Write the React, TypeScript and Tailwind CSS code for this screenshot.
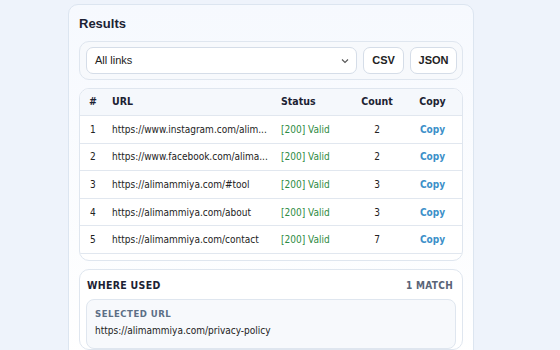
import React from 'react';

const rows = [
  { n: 1, url: 'https://www.instagram.com/alim...', count: 2 },
  { n: 2, url: 'https://www.facebook.com/alima...', count: 2 },
  { n: 3, url: 'https://alimammiya.com/#tool', count: 3 },
  { n: 4, url: 'https://alimammiya.com/about', count: 3 },
  { n: 5, url: 'https://alimammiya.com/contact', count: 7 },
];

const verdana = "font-['Verdana','DejaVu_Sans_Condensed','DejaVu_Sans',sans-serif]";

export default function App() {
  return (
    <div className="w-[560px] h-[350px] overflow-hidden bg-[#eef3fb] font-['Liberation_Sans',Arial,sans-serif]">
      <div className="ml-[68px] mt-[4px] w-[406px] h-[360px] rounded-[10px] border border-[#dce5f0] bg-gradient-to-b from-[#f6f9fe] to-white px-[10px] pt-[11px]">
        <h2 className="text-[13px] font-bold text-[#1c2233] leading-[16px]">Results</h2>

        <div className="mt-[9px] flex items-center gap-[6px] rounded-[10px] border border-[#dfe6ef] bg-[#f7f9fc] p-[5px] pl-[6px]">
          <div className="flex-1 h-[27px] flex items-center justify-between rounded-[7px] border border-[#d5dde8] bg-white pl-[8px] pr-[6px]">
            <span className="text-[11px] text-[#222]">All links</span>
            <svg width="10" height="10" viewBox="0 0 10 10" fill="none" stroke="#555" strokeWidth="1.1">
              <path d="M2 3.5 L5 6.5 L8 3.5" />
            </svg>
          </div>
          <button className="h-[27px] w-[41px] rounded-[7px] border border-[#d5dde8] bg-white text-[11px] font-bold text-[#222]">CSV</button>
          <button className="h-[27px] w-[47px] rounded-[7px] border border-[#d5dde8] bg-white text-[11px] font-bold text-[#222]">JSON</button>
        </div>

        <div className={`mt-[8px] rounded-[10px] border border-[#dfe6ef] bg-white overflow-hidden pb-[6px] ${verdana}`}>
          <div className="flex items-center h-[27px] bg-[#f5f8fc] border-b border-[#e1e7ef] text-[10.5px] font-bold text-[#1c2233]">
            <div className="w-[32px] pl-[9px]">#</div>
            <div className="w-[169px]">URL</div>
            <div className="w-[70px]">Status</div>
            <div className="w-[52px] text-center">Count</div>
            <div className="flex-1 text-center">Copy</div>
          </div>
          {rows.map((r) => (
            <div key={r.n} className="flex items-center h-[27.6px] border-b border-[#e1e7ef] text-[10px] text-[#222]">
              <div className="w-[32px] pl-[10px]">{r.n}</div>
              <div className="w-[169px] whitespace-nowrap">{r.url}</div>
              <div className="w-[70px] text-[#2e8b43]">[200] Valid</div>
              <div className="w-[52px] text-center">{r.count}</div>
              <div className="flex-1 text-center font-bold text-[#3b90c9]">Copy</div>
            </div>
          ))}
        </div>

        <div className={`mt-[8px] rounded-[10px] border border-[#dfe6ef] bg-white px-[6px] pt-[8px] ${verdana}`}>
          <div className="flex items-center justify-between px-[1px]">
            <span className="text-[10.5px] font-bold text-[#1c2233] tracking-[0.3px]">WHERE USED</span>
            <span className="text-[10px] font-bold text-[#596477] tracking-[0.3px] pr-[2px]">1 MATCH</span>
          </div>
          <div className="mt-[5px] rounded-[8px] border border-[#dfe6ef] bg-[#f7f9fc] px-[8px] pt-[7px] pb-[10px]">
            <div className="text-[9.5px] font-bold text-[#5c6f86] tracking-[0.5px]">SELECTED URL</div>
            <div className="mt-[2px] text-[10px] text-[#222]">https://alimammiya.com/privacy-policy</div>
          </div>
        </div>
      </div>
    </div>
  );
}
